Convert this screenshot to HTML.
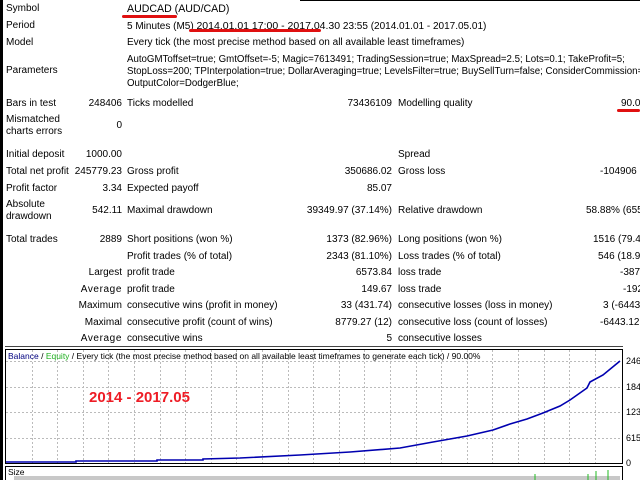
<!DOCTYPE html>
<html><head><meta charset="utf-8"><style>
body{margin:0;width:640px;height:480px;overflow:hidden;background:#fff;position:relative;font-family:"Liberation Sans",sans-serif;font-size:10px;color:#000}
.t{position:absolute;white-space:nowrap;line-height:12px;margin-top:2px}
.r{position:absolute;white-space:nowrap;line-height:12px;text-align:right;margin-top:2px}
.c{position:absolute;white-space:nowrap;line-height:12px}
.b{color:#000080}
</style></head><body>
<div style="position:absolute;left:0;top:0;width:3px;height:480px;background:#000"></div>
<div style="position:absolute;left:300px;top:0;width:340px;height:1px;background:#000"></div>

<div class="t" style="left:6px;top:1px">Symbol</div>
<div class="t" style="left:127px;top:1px;font-size:10.6px">AUDCAD (AUD/CAD)</div>
<div style="position:absolute;left:122px;top:15px;width:55px;height:3px;background:#e01010;border-radius:2px"></div>
<div class="t" style="left:6px;top:18px">Period</div>
<div class="t" style="left:127px;top:18px">5 Minutes (M5) <span style="font-size:10.5px">2014.01.01 17:00 - 2017.04.30</span> 23:55 (2014.01.01 - 2017.05.01)</div>
<div style="position:absolute;left:189px;top:29px;width:132px;height:3px;background:#e01010;border-radius:2px"></div>
<div class="t" style="left:6px;top:35px">Model</div>
<div class="t" style="left:127px;top:35px">Every tick (the most precise method based on all available least timeframes)</div>
<div class="t" style="left:6px;top:63px">Parameters</div>
<div class="t" style="left:127px;top:52px;font-size:9.7px">AutoGMToffset=true; GmtOffset=-5; Magic=7613491; TradingSession=true; MaxSpread=2.5; Lots=0.1; TakeProfit=5;</div>
<div class="t" style="left:127px;top:64px;font-size:9.7px">StopLoss=200; TPInterpolation=true; DollarAveraging=true; LevelsFilter=true; BuySellTurn=false; ConsiderCommission=true</div>
<div class="t" style="left:127px;top:76px;font-size:9.7px">OutputColor=DodgerBlue;</div>

<div class="t" style="left:6px;top:96px">Bars in test</div>
<div class="r" style="right:518px;top:96px">248406</div>
<div class="t" style="left:127px;top:96px">Ticks modelled</div>
<div class="r" style="right:248px;top:96px">73436109</div>
<div class="t" style="left:398px;top:96px">Modelling quality</div>
<div class="t" style="left:621px;top:96px">90.0</div>
<div style="position:absolute;left:617px;top:109px;width:23px;height:3px;background:#e01010;border-radius:2px"></div>
<div class="t" style="left:6px;top:112px">Mismatched<br>charts errors</div>
<div class="r" style="right:518px;top:118px">0</div>

<div class="t" style="left:6px;top:147px">Initial deposit</div>
<div class="r" style="right:518px;top:147px">1000.00</div>
<div class="t" style="left:398px;top:147px">Spread</div>
<div class="t" style="left:6px;top:164px">Total net profit</div>
<div class="r" style="right:518px;top:164px">245779.23</div>
<div class="t" style="left:127px;top:164px">Gross profit</div>
<div class="r" style="right:248px;top:164px">350686.02</div>
<div class="t" style="left:398px;top:164px">Gross loss</div>
<div class="t" style="left:600px;top:164px">-104906</div>
<div class="t" style="left:6px;top:181px">Profit factor</div>
<div class="r" style="right:518px;top:181px">3.34</div>
<div class="t" style="left:127px;top:181px">Expected payoff</div>
<div class="r" style="right:248px;top:181px">85.07</div>
<div class="t" style="left:6px;top:197px">Absolute<br>drawdown</div>
<div class="r" style="right:518px;top:203px">542.11</div>
<div class="t" style="left:127px;top:203px">Maximal drawdown</div>
<div class="r" style="right:248px;top:203px">39349.97 (37.14%)</div>
<div class="t" style="left:398px;top:203px">Relative drawdown</div>
<div class="t" style="left:586px;top:203px">58.88% (655</div>

<div class="t" style="left:6px;top:232px">Total trades</div>
<div class="r" style="right:518px;top:232px">2889</div>
<div class="t" style="left:127px;top:232px">Short positions (won %)</div>
<div class="r" style="right:248px;top:232px">1373 (82.96%)</div>
<div class="t" style="left:398px;top:232px">Long positions (won %)</div>
<div class="t" style="left:593px;top:232px">1516 (79.42</div>
<div class="t" style="left:127px;top:249px">Profit trades (% of total)</div>
<div class="r" style="right:248px;top:249px">2343 (81.10%)</div>
<div class="t" style="left:398px;top:249px">Loss trades (% of total)</div>
<div class="t" style="left:598px;top:249px">546 (18.90</div>
<div class="r" style="right:518px;top:265px">Largest</div>
<div class="t" style="left:127px;top:265px">profit trade</div>
<div class="r" style="right:248px;top:265px">6573.84</div>
<div class="t" style="left:398px;top:265px">loss trade</div>
<div class="t" style="left:620px;top:265px">-3874</div>
<div class="r" style="right:518px;top:282px;letter-spacing:0.6px">Average</div>
<div class="t" style="left:127px;top:282px">profit trade</div>
<div class="r" style="right:248px;top:282px">149.67</div>
<div class="t" style="left:398px;top:282px">loss trade</div>
<div class="t" style="left:623px;top:282px">-192</div>
<div class="r" style="right:518px;top:298px">Maximum</div>
<div class="t" style="left:127px;top:298px">consecutive wins (profit in money)</div>
<div class="r" style="right:248px;top:298px">33 (431.74)</div>
<div class="t" style="left:398px;top:298px">consecutive losses (loss in money)</div>
<div class="t" style="left:603px;top:298px">3 (-6443</div>
<div class="r" style="right:518px;top:315px">Maximal</div>
<div class="t" style="left:127px;top:315px">consecutive profit (count of wins)</div>
<div class="r" style="right:248px;top:315px">8779.27 (12)</div>
<div class="t" style="left:398px;top:315px">consecutive loss (count of losses)</div>
<div class="t" style="left:600px;top:315px">-6443.12</div>
<div class="r" style="right:518px;top:331px;letter-spacing:0.6px">Average</div>
<div class="t" style="left:127px;top:331px">consecutive wins</div>
<div class="r" style="right:248px;top:331px">5</div>
<div class="t" style="left:398px;top:331px">consecutive losses</div>
<div style="position:absolute;left:5px;top:346px;width:618px;height:1px;background:#444"></div>

<svg style="position:absolute;left:0;top:0" width="640" height="480">
<rect x="5.5" y="349.5" width="617" height="114" fill="#fff" stroke="#000" stroke-width="1"/>
<g stroke="#bbb" stroke-dasharray="2,2" stroke-width="1">
<line x1="6" y1="361.5" x2="622" y2="361.5"/><line x1="6" y1="387.5" x2="622" y2="387.5"/>
<line x1="6" y1="412.5" x2="622" y2="412.5"/><line x1="6" y1="438.5" x2="622" y2="438.5"/>
<line x1="32.5" y1="350" x2="32.5" y2="463"/><line x1="57.5" y1="350" x2="57.5" y2="463"/><line x1="83.5" y1="350" x2="83.5" y2="463"/><line x1="108.5" y1="350" x2="108.5" y2="463"/><line x1="134.5" y1="350" x2="134.5" y2="463"/><line x1="160.5" y1="350" x2="160.5" y2="463"/><line x1="185.5" y1="350" x2="185.5" y2="463"/><line x1="211.5" y1="350" x2="211.5" y2="463"/><line x1="236.5" y1="350" x2="236.5" y2="463"/><line x1="262.5" y1="350" x2="262.5" y2="463"/><line x1="288.5" y1="350" x2="288.5" y2="463"/><line x1="313.5" y1="350" x2="313.5" y2="463"/><line x1="339.5" y1="350" x2="339.5" y2="463"/><line x1="364.5" y1="350" x2="364.5" y2="463"/><line x1="390.5" y1="350" x2="390.5" y2="463"/><line x1="416.5" y1="350" x2="416.5" y2="463"/><line x1="441.5" y1="350" x2="441.5" y2="463"/><line x1="467.5" y1="350" x2="467.5" y2="463"/><line x1="492.5" y1="350" x2="492.5" y2="463"/><line x1="518.5" y1="350" x2="518.5" y2="463"/><line x1="544.5" y1="350" x2="544.5" y2="463"/><line x1="569.5" y1="350" x2="569.5" y2="463"/><line x1="595.5" y1="350" x2="595.5" y2="463"/>
</g>
<polyline fill="none" stroke="#0000b0" stroke-width="1.6" points="6,462 76,462 76,461 157,461 157,460 203,460 203,459 240,458 300,455 350,452 400,448 433,442 467,436 493,430 510,424 527,419 543,413 560,406 570,400 587,388 590,382 603,375 620,361"/>
<g font-family="Liberation Sans,sans-serif" font-size="9" fill="#000">
<text x="626" y="364">2463</text><text x="626" y="390">1847</text><text x="626" y="415">1231</text><text x="626" y="441">6158</text><text x="626" y="466">0</text>
</g>
<rect x="5.5" y="466.5" width="617" height="14" fill="#fff" stroke="#000"/>
<rect x="14" y="476" width="606" height="4" fill="#c8c8c8"/>
<g stroke="#22bb22" stroke-width="1"><line x1="535" y1="474" x2="535" y2="480"/><line x1="588" y1="474" x2="588" y2="480"/><line x1="596" y1="471" x2="596" y2="480"/><line x1="608" y1="470" x2="608" y2="480"/></g>
</svg>
<div class="c" style="left:8px;top:350px;font-size:8.5px"><span class="b">Balance</span> / <span style="color:#20b020">Equity</span> / Every tick (the most precise method based on all available least timeframes to generate each tick) / 90.00%</div>
<div class="c" style="left:89px;top:389px;font-size:15px;font-weight:bold;color:#ee1c25;line-height:18px">2014 - 2017.05</div>
<div class="c" style="left:8px;top:466px;font-size:8.5px">Size</div>
</body></html>
